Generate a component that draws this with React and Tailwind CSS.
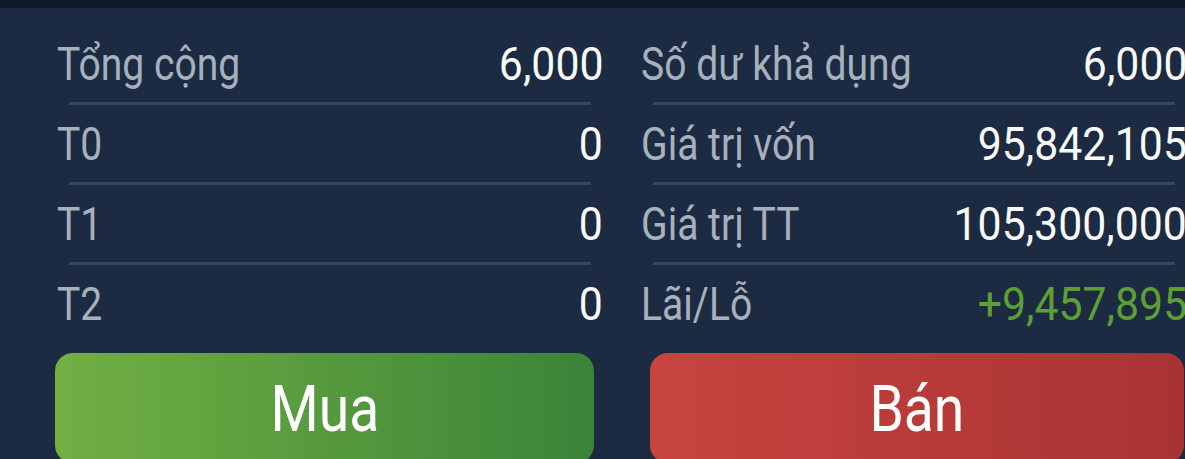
import React from 'react';

const left = [
  { label: 'Tổng cộng', value: '6,000' },
  { label: 'T0', value: '0' },
  { label: 'T1', value: '0' },
  { label: 'T2', value: '0' },
];

const right = [
  { label: 'Số dư khả dụng', value: '6,000' },
  { label: 'Giá trị vốn', value: '95,842,105' },
  { label: 'Giá trị TT', value: '105,300,000' },
  { label: 'Lãi/Lỗ', value: '+9,457,895', tone: 'up' },
];

const font = { fontFamily: 'Roboto, "Noto Sans", sans-serif' };

const Row = ({ label, value, tone, last }) => (
  <div>
    <div className="flex items-center justify-between pt-[12px] pb-[11px] h-[77px]">
      <span className="inline-block origin-left scale-x-[0.85] text-[46px] leading-[54px] text-[#a7b1be] whitespace-nowrap">
        {label}
      </span>
      <span
        className={`inline-block origin-right scale-x-[0.93] text-[46px] leading-[54px] whitespace-nowrap ${
          tone === 'up' ? 'text-[#5d9f35]' : 'text-[#f7f9fb]'
        }`}
      >
        {value}
      </span>
    </div>
    {!last && <div className="mx-[12px] h-[3px] bg-[#36465c]" />}
  </div>
);

const Column = ({ rows }) => (
  <div className="w-[546px] shrink-0">
    {rows.map((r, i) => (
      <Row key={r.label} {...r} last={i === rows.length - 1} />
    ))}
  </div>
);

export default function App() {
  return (
    <div className="w-[1185px] h-[459px] overflow-hidden bg-[#1c2b42]" style={font}>
      <div className="h-[8px] bg-[#0d1a2c]" />
      <div className="flex gap-[38px] pl-[57px] pt-[17px] w-[1260px]">
        <Column rows={left} />
        <Column rows={right} />
      </div>
      <div className="flex pl-[55px] pt-[11px] w-[1260px]">
        <button className="w-[539px] h-[110px] shrink-0 rounded-[18px] bg-gradient-to-r from-[#72b043] to-[#3a8438] text-white text-[65px] leading-[65px] pt-[24px] flex justify-center items-start">
          <span className="inline-block scale-x-[0.85]">Mua</span>
        </button>
        <button className="ml-[56px] w-[534px] h-[110px] shrink-0 rounded-[18px] bg-gradient-to-r from-[#c8443f] to-[#a83333] text-white text-[65px] leading-[65px] pt-[24px] flex justify-center items-start">
          <span className="inline-block scale-x-[0.85]">Bán</span>
        </button>
      </div>
    </div>
  );
}
